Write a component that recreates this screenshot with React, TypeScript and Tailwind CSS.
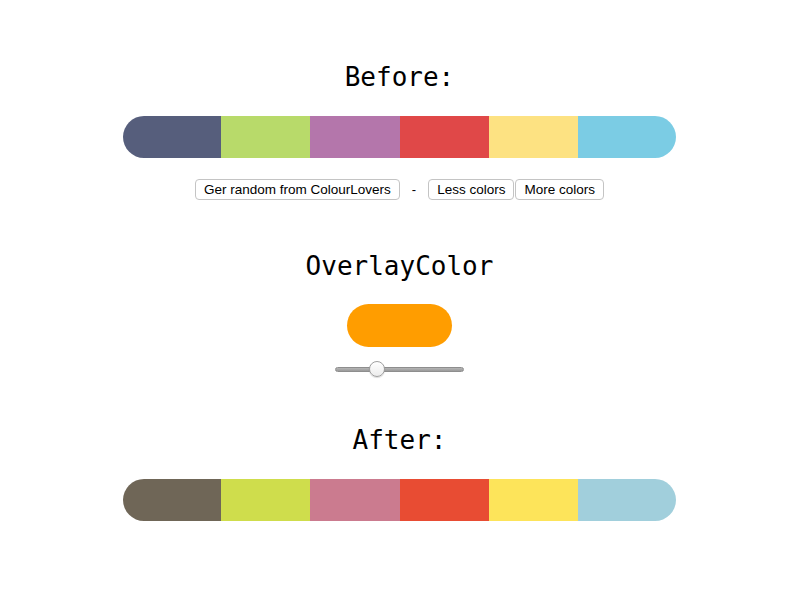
import React from 'react';

const before = ['#565e7c', '#b8da6a', '#b476ab', '#e04848', '#fde282', '#7bcce4'];
const after = ['#6f6657', '#cfdd4c', '#cb7b8f', '#e84c33', '#fde45a', '#a1cfdc'];

function Palette({ colors }: { colors: string[] }) {
  return (
    <div className="flex w-[553px] h-[42px] rounded-[21px] overflow-hidden">
      {colors.map((c, i) => (
        <div
          key={i}
          className={i === 0 || i === colors.length - 1 ? 'w-[98px] shrink-0' : 'flex-1'}
          style={{ backgroundColor: c }}
        />
      ))}
    </div>
  );
}

function Heading({ children }: { children: React.ReactNode }) {
  return (
    <h2 className="text-[26px] leading-[30px] text-black font-['DejaVu_Sans_Mono',monospace]">
      {children}
    </h2>
  );
}

function Button({ children }: { children: React.ReactNode }) {
  return (
    <button className="h-[21px] px-[8px] bg-white border border-[#c4c4c4] rounded-[4px] text-[13.5px] leading-[19px] text-black font-['Liberation_Sans',Arial,sans-serif]">
      {children}
    </button>
  );
}

export default function App() {
  return (
    <div className="w-[799px] h-[600px] bg-white flex flex-col items-center pt-[62px]">
      <Heading>Before:</Heading>
      <div className="mt-[24px]">
        <Palette colors={before} />
      </div>

      {/* palette controls */}
      <div className="mt-[21px] flex items-center">
        <Button>Ger random from ColourLovers</Button>
        <span className="mx-[12px] text-[13px] text-black font-['Liberation_Sans',Arial,sans-serif]">-</span>
        <Button>Less colors</Button>
        <div className="w-px" />
        <Button>More colors</Button>
      </div>

      <div className="mt-[51px]">
        <Heading>OverlayColor</Heading>
      </div>
      <div className="mt-[23px] w-[105px] h-[43px] rounded-[22px] bg-[#ff9d00]" />

      {/* opacity slider */}
      <div className="mt-[14px] relative w-[129px] h-[16px] flex items-center">
        <div className="w-full h-[5px] rounded-full bg-gradient-to-b from-[#b5b5b5] to-[#9a9a9a] border border-[#8e8e8e]" />
        <div className="absolute left-[34px] top-0 w-[16px] h-[16px] rounded-full bg-gradient-to-b from-white to-[#ececec] border border-[#9f9f9f] shadow-[0_1px_1px_rgba(0,0,0,0.15)]" />
      </div>

      <div className="mt-[48px]">
        <Heading>After:</Heading>
      </div>
      <div className="mt-[24px]">
        <Palette colors={after} />
      </div>
    </div>
  );
}
